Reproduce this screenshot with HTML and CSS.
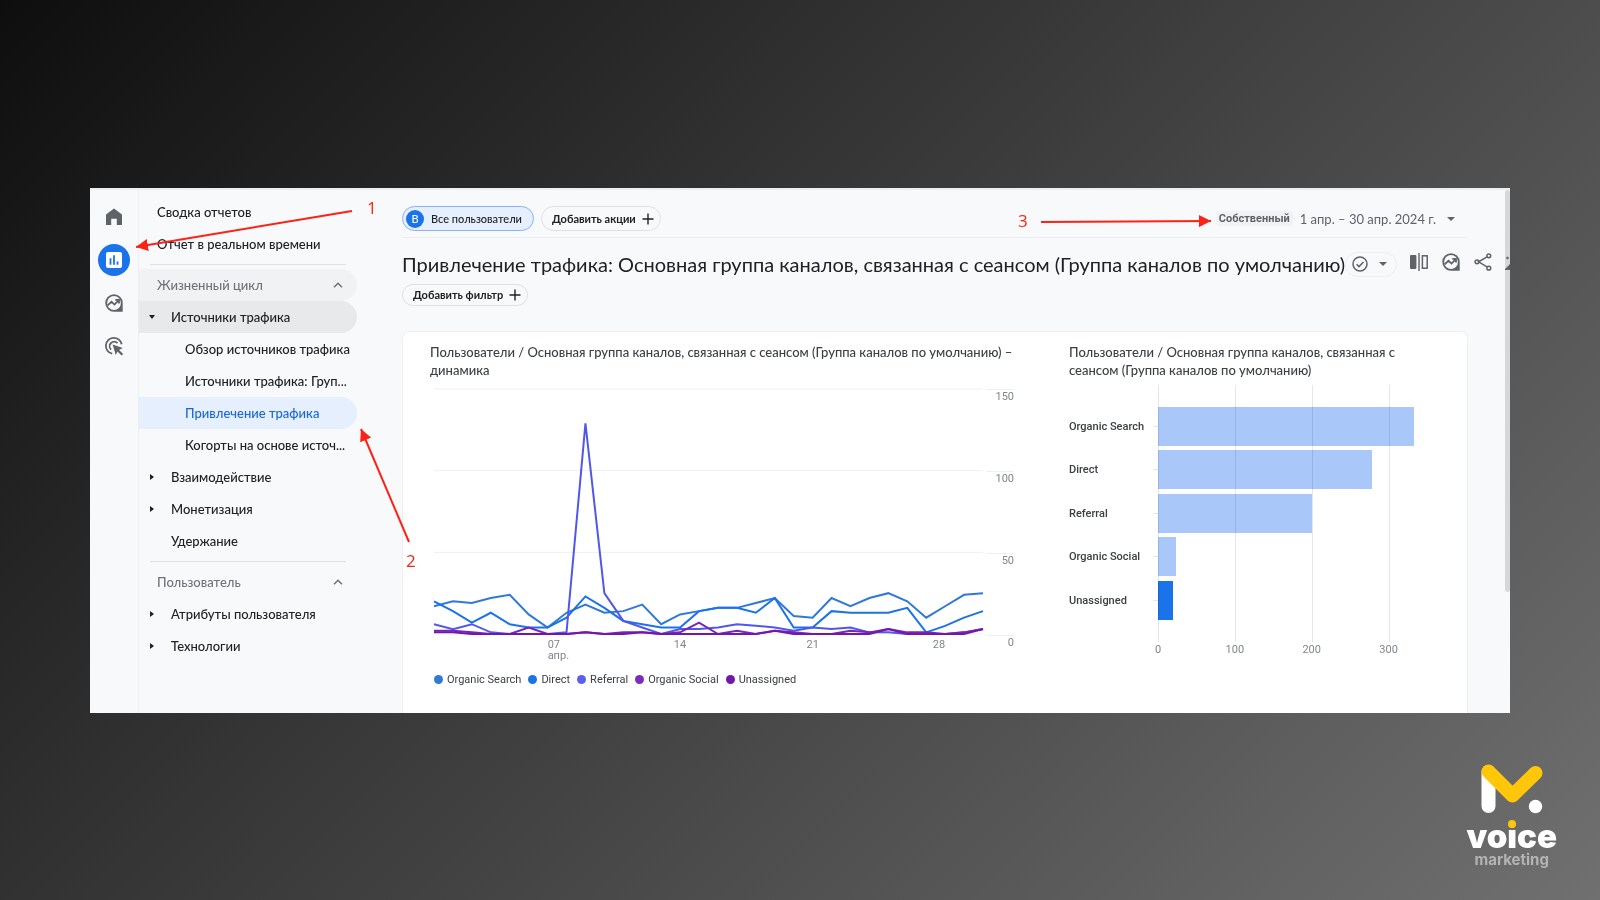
FILE: index.html
```html
<!DOCTYPE html>
<html lang="ru">
<head>
    <meta charset="UTF-8">
    <meta name="viewport" content="width=device-width, initial-scale=1.0">
    <title>Привлечение трафика</title>
    <link rel="stylesheet" href="styles.css">
</head>
<body>
    <!-- shared icons -->
    <svg class="sprite" aria-hidden="true">
        <symbol id="insights" viewBox="0 0 20 20">
            <path d="M10 1.3a8.7 8.7 0 1 0 0 17.4h8.7V10A8.7 8.7 0 0 0 10 1.3z" fill="currentColor"/>
            <circle cx="10" cy="10" r="6.9" fill="#f8f9fb"/>
            <path d="M3.6 12.4l3.9-3.6 3 2.8 4.3-4.4M11.3 6.9h3.7v3.7" fill="none" stroke="currentColor" stroke-width="1.8"/>
        </symbol>
        <symbol id="plus" viewBox="0 0 12 12">
            <path d="M6 0.5v11M0.5 6h11" fill="none" stroke="currentColor" stroke-width="1.4"/>
        </symbol>
        <symbol id="down" viewBox="0 0 8 4">
            <path d="M0 0h8L4 4z" fill="currentColor"/>
        </symbol>
        <symbol id="chevron" viewBox="0 0 10 6">
            <path d="M1 5.3L5 1.2l4 4.1" fill="none" stroke="currentColor" stroke-width="1.5"/>
        </symbol>
    </svg>

    <div class="panel">
        <div class="rail">
            <button type="button" aria-label="Главная">
                <svg width="16" height="18" viewBox="0 0 16 18"><path d="M0 6.4L8 .6l8 5.8V17h-5.2v-6.3H5.2V17H0z" fill="currentColor"/></svg>
            </button>
            <button type="button" class="current" aria-label="Отчеты">
                <svg width="16" height="16" viewBox="0 0 16 16"><rect width="16" height="16" rx="2" fill="#fff"/><path d="M4.5 6.2v6.6M8 3.2v9.6M11.5 9.4v3.4" stroke="#1a73e8" stroke-width="1.8"/></svg>
            </button>
            <button type="button" aria-label="Исследования">
                <svg width="20" height="20"><use href="#insights"/></svg>
            </button>
            <button type="button" aria-label="Реклама">
                <svg width="20" height="20" viewBox="0 0 20 20">
                    <path d="M8.2 17.7A8 8 0 1 1 17.7 8.2M7 13.6A4.6 4.6 0 1 1 13.6 7" fill="none" stroke="currentColor" stroke-width="1.8"/>
                    <path d="M8.6 8.6l10.2 3.5-3.7 1.8 4 4-1.6 1.6-4-4-1.7 3.6z" fill="currentColor"/>
                </svg>
            </button>
        </div>

        <nav class="menu">
            <a href="#" class="top">Сводка отчетов</a>
            <a href="#" class="top">Отчет в реальном времени</a>
            <hr>
            <button type="button" class="group hovered">Жизненный цикл <svg width="10" height="6"><use href="#chevron"/></svg></button>
            <a href="#" class="item opened">Источники трафика</a>
            <a href="#" class="sub">Обзор источников трафика</a>
            <a href="#" class="sub">Источники трафика: Груп...</a>
            <a href="#" class="sub selected">Привлечение трафика</a>
            <a href="#" class="sub">Когорты на основе источ...</a>
            <a href="#" class="item closed">Взаимодействие</a>
            <a href="#" class="item closed">Монетизация</a>
            <a href="#" class="item">Удержание</a>
            <hr>
            <button type="button" class="group">Пользователь <svg width="10" height="6"><use href="#chevron"/></svg></button>
            <a href="#" class="item closed">Атрибуты пользователя</a>
            <a href="#" class="item closed">Технологии</a>
        </nav>

        <main class="report">
            <div class="topbar">
                <button type="button" class="chip audience"><span class="letter">В</span>Все пользователи</button>
                <button type="button" class="chip">Добавить акции <svg width="12" height="12"><use href="#plus"/></svg></button>
                <button type="button" class="dates">
                    <span class="badge">Собственный</span>
                    1 апр. – 30 апр. 2024 г.
                    <svg width="8" height="4"><use href="#down"/></svg>
                </button>
            </div>

            <div class="heading">
                <h1>Привлечение трафика: Основная группа каналов, связанная с сеансом (Группа каналов по умолчанию)</h1>
                <button type="button" class="chip status" aria-label="Статус">
                    <svg width="16" height="16" viewBox="0 0 16 16"><circle cx="8" cy="8" r="7" fill="none" stroke="currentColor" stroke-width="1.5"/><path d="M4.6 8.2l2.4 2.4 4.5-4.7" fill="none" stroke="currentColor" stroke-width="1.5"/></svg>
                    <svg width="8" height="4"><use href="#down"/></svg>
                </button>
                <div class="tools">
                    <button type="button" aria-label="Сравнить">
                        <svg width="18" height="18" viewBox="0 0 18 18"><rect x="0" y="2" width="6.4" height="14" rx="1" fill="currentColor"/><path d="M9 0v18" stroke="currentColor" stroke-width="1.4"/><rect x="12.4" y="2.8" width="4.8" height="12.4" fill="none" stroke="currentColor" stroke-width="1.5"/></svg>
                    </button>
                    <button type="button" aria-label="Статистика">
                        <svg width="20" height="20"><use href="#insights"/></svg>
                    </button>
                    <button type="button" aria-label="Поделиться">
                        <svg width="18" height="18" viewBox="0 0 18 18" fill="none" stroke="currentColor" stroke-width="1.5"><path d="M13 3.8L4.6 8.8l8.4 5"/><circle cx="14.8" cy="2.8" r="1.9"/><circle cx="3" cy="8.8" r="1.9"/><circle cx="14.8" cy="15.2" r="1.9"/></svg>
                    </button>
                    <button type="button" aria-label="Изменить">
                        <svg width="18" height="18" viewBox="0 0 18 18"><path d="M0 16l7-7 3 3-5 5H0zM1 4.5l2-1 1 2-2 1z" fill="currentColor"/></svg>
                    </button>
                </div>
            </div>
            <button type="button" class="chip filter">Добавить фильтр <svg width="12" height="12"><use href="#plus"/></svg></button>

            <section class="card">
                <div class="trend">
                    <h2>Пользователи / Основная группа каналов, связанная с сеансом (Группа каналов по умолчанию) – динамика</h2>
                    <div class="plot">
                        <!-- one unit per day across, users upwards -->
                        <svg class="lines" viewBox="0 0 29 150" preserveAspectRatio="none">
                            <path class="grid" d="M0 0H29M0 50H29M0 100H29M0 150H29"/>
                            <g transform="translate(0 150) scale(1 -1)">
                                <polyline class="search" points="0,17 1,20 2,19 3,22 4,24 5,12 6,4 7,13 8,18 9,13 10,14 11,18 12,6 13,12 14,14 15,16 16,16 17,19 18,22 19,11 20,10 21,22 22,17 23,22 24,25 25,20 26,10 27,17 28,24 29,25"/>
                                <polyline class="direct" points="0,20 1,14 2,7 3,13 4,6 5,4 6,4 7,10 8,23 9,16 10,8 11,6 12,4 13,4 14,14 15,16 16,16 17,13 18,22 19,4 20,4 21,14 22,13 23,13 24,13 25,16 26,1 27,5 28,10 29,14"/>
                                <polyline class="referral" points="0,6 1,3 2,6 3,1 4,0 5,0 6,0 7,1 8,129 9,25 10,8 11,4 12,0 13,3 14,3 15,4 16,6 17,5 18,4 19,2 20,4 21,3 22,4 23,1 24,1 25,0 26,0 27,0 28,1 29,3"/>
                                <polyline class="social" points="0,2 1,2 2,1 3,0 4,0 5,4 6,0 7,0 8,1 9,0 10,1 11,1 12,0 13,1 14,7 15,0 16,2 17,0 18,2 19,1 20,0 21,0 22,2 23,1 24,3 25,1 26,1 27,0 28,1 29,3"/>
                                <polyline class="unassigned" points="0,1 1,1 2,0 3,0 4,0 5,0 6,0 7,0 8,1 9,0 10,0 11,1 12,0 13,0 14,0 15,0 16,0 17,0 18,2 19,0 20,0 21,0 22,0 23,0 24,3 25,0 26,0 27,0 28,0 29,3"/>
                            </g>
                        </svg>
                        <div class="users"><span>150</span><span>100</span><span>50</span><span>0</span></div>
                        <svg class="days">
                            <text x="20.7%" y="14">07</text>
                            <text x="20.7%" y="25">апр.</text>
                            <text x="44.8%" y="14" text-anchor="middle">14</text>
                            <text x="69%" y="14" text-anchor="middle">21</text>
                            <text x="93.1%" y="14" text-anchor="end">28</text>
                        </svg>
                    </div>
                    <ul class="legend">
                        <li class="search">Organic Search</li>
                        <li class="direct">Direct</li>
                        <li class="referral">Referral</li>
                        <li class="social">Organic Social</li>
                        <li class="unassigned">Unassigned</li>
                    </ul>
                </div>

                <div class="channels">
                    <h2>Пользователи / Основная группа каналов, связанная с сеансом (Группа каналов по умолчанию)</h2>
                    <div class="bars">
                        <div class="names"><span>Organic Search</span><span>Direct</span><span>Referral</span><span>Organic Social</span><span>Unassigned</span></div>
                        <div class="area">
                            <div class="gridlines"><i></i><i></i><i></i><i></i></div>
                            <div class="bar" style="width: 95.1%"></div>
                            <div class="bar" style="width: 79.7%"></div>
                            <div class="bar" style="width: 57.4%"></div>
                            <div class="bar" style="width: 6.6%"></div>
                            <div class="bar active" style="width: 5.4%"></div>
                        </div>
                        <div class="scale"><span>0</span><span>100</span><span>200</span><span>300</span></div>
                    </div>
                </div>
            </section>
        </main>

        <div class="scrollbar"></div>

        <!-- numbered arrows over the report -->
        <svg class="marks" viewBox="0 2 1420 525">
            <defs>
                <marker id="head" markerUnits="userSpaceOnUse" markerWidth="14" markerHeight="12" refX="12" refY="6" orient="auto">
                    <path d="M0 0l12 6-12 6z" fill="#fc2216"/>
                </marker>
            </defs>
            <path d="M262 23L46 59" marker-end="url(#head)"/>
            <path d="M319 354L271 241" marker-end="url(#head)"/>
            <path d="M951 34L1121 33" marker-end="url(#head)"/>
            <text x="277" y="26">1</text>
            <text x="316" y="379">2</text>
            <text x="928" y="39">3</text>
        </svg>
    </div>

    <footer class="brand">
        <svg width="62" height="50" viewBox="0 0 62 50">
            <path d="M7.5 8v34" stroke="#fff" stroke-width="14" stroke-linecap="round"/>
            <path d="M7.5 7.5L31.5 31.5L54.5 9" fill="none" stroke="#ffc60a" stroke-width="14" stroke-linecap="round" stroke-linejoin="round"/>
            <circle cx="54.5" cy="42.5" r="6.7" fill="#fff"/>
        </svg>
        <strong>voice</strong>
        <small>marketing</small>
    </footer>
</body>
</html>
```
FILE: styles.css
```css
* {
    box-sizing: border-box;
}

body {
    margin: 0;
    min-height: 100vh;
    padding: 0 90px;
    display: grid;
    grid-template-rows: 1fr auto 1fr;
    background: linear-gradient(135deg, #0e0e0e, #707070);
    font-family: Lato, "Open Sans", sans-serif;
    font-size: 13px;
    color: #202124;
}

h1, h2, ul {
    margin: 0;
    padding: 0;
    font-weight: normal;
}

a {
    color: inherit;
    text-decoration: none;
}

button {
    font: inherit;
    color: inherit;
    background: none;
    border: none;
    padding: 0;
}

svg {
    display: block;
    flex: none;
}

.sprite {
    position: absolute;
    width: 0;
    height: 0;
}

.panel {
    grid-row: 2;
    position: relative;
    display: grid;
    grid-template-columns: 49px 218px minmax(0, 1fr);
    overflow: hidden;
    background: #f8f9fb;
    border-top: 2px solid #eceef1;
}

/* left rail */
.rail {
    display: flex;
    flex-direction: column;
    align-items: center;
    gap: 11px;
    padding-top: 11px;
    border-right: 1px solid #eceef1;
    color: #5f6368;
}

.rail button {
    display: grid;
    place-items: center;
    width: 32px;
    height: 32px;
    border-radius: 50%;
}

.rail .current {
    background: #1a73e8;
}

/* menu */
.menu {
    padding-top: 6px;
    font-weight: 500;
}

.menu a,
.menu .group {
    display: flex;
    align-items: center;
    width: 100%;
    height: 32px;
    border-radius: 0 16px 16px 0;
    white-space: nowrap;
}

.menu hr {
    margin: 4px 11px 4px;
    border: none;
    border-top: 1px solid #e0e2e6;
}

.menu .top {
    padding-left: 18px;
}

.menu .group {
    justify-content: space-between;
    padding: 0 14px 0 18px;
    color: #6f7378;
}

.menu .hovered {
    background: #f1f2f4;
}

.menu .item {
    position: relative;
    padding-left: 32px;
}

.menu .opened {
    background: #e8e9eb;
}

.menu .closed::before,
.menu .opened::before {
    content: "";
    position: absolute;
    left: 11px;
    border: 3px solid transparent;
    border-left: 4px solid #202124;
    border-right: none;
}

.menu .opened::before {
    left: 10px;
    border: 3px solid transparent;
    border-top: 4px solid #202124;
    border-bottom: none;
}

.menu .sub {
    padding-left: 46px;
}

.menu .selected {
    background: #e6effd;
    color: #1967d2;
}

/* report */
.report {
    padding: 13px 42px 0 45px;
}

.topbar {
    display: flex;
    align-items: center;
    gap: 7px;
    height: 35px;
    padding-bottom: 2px;
    border-bottom: 1px solid #eceef1;
}

.chip {
    display: flex;
    align-items: center;
    gap: 6px;
    height: 25px;
    padding: 0 6px 0 10px;
    border: 1px solid #dfe1e5;
    border-radius: 13px;
    font-size: 11px;
    font-weight: bold;
    white-space: nowrap;
}

.audience {
    gap: 7px;
    padding: 0 11px 0 3px;
    border-color: #8ab1f5;
    background: #e6effd;
    font-weight: 500;
}

.letter {
    display: grid;
    place-items: center;
    width: 18px;
    height: 18px;
    border-radius: 50%;
    background: #1a73e8;
    color: #fff;
}

.dates {
    display: flex;
    align-items: center;
    gap: 7px;
    margin-left: auto;
    padding-right: 13px;
    color: #5f6368;
    white-space: nowrap;
}

.dates svg {
    margin-left: 4px;
}

.badge {
    padding: 0 3px;
    border-radius: 3px;
    background: #f1f2f4;
    font: bold 11px/15px Roboto, sans-serif;
}

.heading {
    display: flex;
    align-items: center;
    height: 43px;
    margin-right: -42px;
    padding-top: 10px;
    color: #5f6368;
}

.heading h1 {
    color: #202124;
    font-size: 20px;
    white-space: nowrap;
}

.status {
    width: 52px;
    flex: none;
    justify-content: space-between;
    padding: 0 9px 0 6px;
    border-color: #eceef1;
}

/* last tool runs past the edge, above the scrollbar */
.tools {
    position: relative;
    z-index: 1;
    display: flex;
    flex: none;
    gap: 13px;
    margin-left: 13px;
    margin-bottom: 5px;
}

.filter {
    height: 22px;
    margin-top: 3px;
}

.card {
    display: grid;
    grid-template-columns: minmax(0, 1fr) 358px;
    gap: 55px;
    margin-top: 25px;
    padding: 11px 40px 26px 27px;
    border: 1px solid #eceef1;
    border-bottom: none;
    border-radius: 7px 7px 0 0;
    background: #fff;
}

.card h2 {
    color: #3c4043;
    font-size: 13px;
    font-weight: 500;
    line-height: 18px;
}

/* line chart */
.plot {
    display: grid;
    grid-template-columns: minmax(0, 1fr) 28px;
    gap: 0 3px;
    margin: 10px 0 0 4px;
    font-family: Roboto, sans-serif;
    font-size: 11px;
    color: #80868b;
}

.lines {
    width: 100%;
    height: 245px;
    overflow: visible;
}

.lines path,
.lines polyline {
    fill: none;
    stroke-width: 2;
    vector-effect: non-scaling-stroke;
}

.lines .grid {
    stroke: #eeeff0;
    stroke-width: 1;
}

.search { stroke: #3079d8; }
.direct { stroke: #1a73e8; }
.referral { stroke: #5257ea; }
.social { stroke: #7627bb; }
.unassigned { stroke: #7317ab; }

.users {
    grid-row: span 2;
    text-align: right;
}

.users span {
    display: block;
    height: 82px;
    border-top: 1px solid #eeeff0;
    line-height: 13px;
}

.users span:last-child {
    height: 14px;
}

.days {
    width: 100%;
    height: 28px;
    fill: #80868b;
}

.legend {
    display: flex;
    gap: 7px;
    margin: 11px 0 0 4px;
    list-style: none;
    font-family: Roboto, sans-serif;
    font-size: 11px;
    line-height: 14px;
    color: #3c4043;
}

.legend li {
    display: flex;
    align-items: center;
    gap: 4px;
}

.legend li::before {
    content: "";
    width: 9px;
    height: 9px;
    border-radius: 50%;
    background: #3079d8;
}

.legend .direct::before { background: #1a73e8; }
.legend .referral::before { background: #5b5fef; }
.legend .social::before { background: #7b2bbd; }
.legend .unassigned::before { background: #7317ab; }

/* bar chart */
.bars {
    display: grid;
    grid-template-columns: 89px 1fr;
    margin-top: 6px;
    font-family: Roboto, sans-serif;
    font-size: 11px;
}

.names,
.area {
    display: flex;
    flex-direction: column;
    justify-content: space-between;
    height: 257px;
    padding: 22px 0;
}

.names span {
    position: relative;
    color: #3c4043;
    font-weight: 500;
    line-height: 39px;
}

.names span::after {
    content: "";
    position: absolute;
    right: 0;
    top: 19px;
    width: 5px;
    border-top: 1px solid #e4e6e8;
}

.area {
    position: relative;
}

.gridlines {
    position: absolute;
    inset: 0;
    display: flex;
}

.gridlines i,
.scale span {
    flex: 0 0 28.57%;
}

.gridlines i {
    border-left: 1px solid #e4e6e8;
}

.bar {
    height: 39px;
    background: #a9c7f8;
    mix-blend-mode: multiply;
}

.bar.active {
    background: #1a73e8;
}

.scale {
    grid-column: 2;
    display: flex;
    color: #80868b;
    line-height: 16px;
}

/* label is centred under its grid line */
.scale span {
    margin-left: -14.28%;
    margin-right: 14.28%;
    text-align: center;
}

.scrollbar {
    position: absolute;
    top: 0;
    right: 0;
    width: 5px;
    height: 402px;
    border-radius: 3px;
    background: #d6d7d9;
}

.marks {
    position: absolute;
    top: 0;
    left: 0;
    width: 100%;
    pointer-events: none;
    font-family: "Open Sans", sans-serif;
    font-size: 17px;
    fill: #fc2216;
}

.marks > path {
    stroke: #fc2216;
    stroke-width: 2;
}

/* logo */
.brand {
    grid-row: 3;
    place-self: end;
    display: flex;
    flex-direction: column;
    align-items: center;
    margin: 0 -47px 33px 0;
    font-family: Inter, sans-serif;
    color: #fff;
}

.brand strong {
    position: relative;
    margin-top: 5px;
    font-size: 33px;
    font-weight: 900;
    line-height: 34px;
}

/* yellow dot over the i */
.brand strong::after {
    content: "";
    position: absolute;
    left: 42px;
    top: 1px;
    width: 8px;
    height: 8px;
    border-radius: 50%;
    background: #ffc60a;
}

.brand small {
    color: #b4b4b4;
    font-size: 15px;
    font-weight: bold;
    line-height: 14px;
}
```
